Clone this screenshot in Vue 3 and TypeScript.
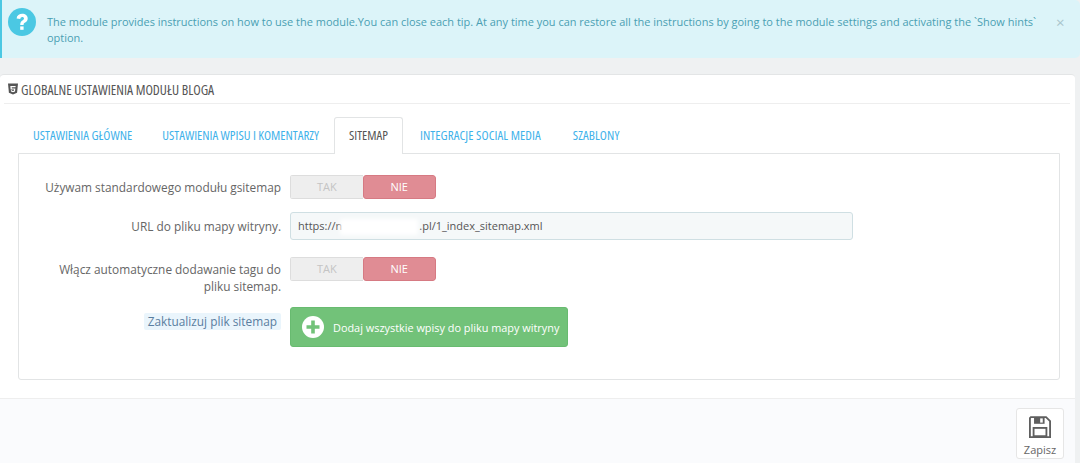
<script setup lang="ts">
const tabs = [
  { name: 'USTAWIENIA GŁÓWNE', active: false },
  { name: 'USTAWIENIA WPISU I KOMENTARZY', active: false },
  { name: 'SITEMAP', active: true },
  { name: 'INTEGRACJE SOCIAL MEDIA', active: false },
  { name: 'SZABLONY', active: false }
]
</script>

<template>
  <div class="page">
    <div class="alert">
      <svg class="alert-icon" viewBox="0 0 28 28">
        <circle cx="14" cy="14" r="14" fill="#4bc8e3" />
        <path d="M8.6 10.4c.4-3 2.6-4.6 5.6-4.6 3.2 0 5.5 1.8 5.5 4.6 0 2.2-1.2 3.2-2.6 4.1-1.2.8-1.5 1.3-1.5 2.5h-3.4c0-2.3.7-3.4 2.2-4.4 1-.7 1.6-1.2 1.6-2 0-1-.7-1.6-1.7-1.6-1.1 0-1.8.7-2 1.9z" fill="#fff" />
        <rect x="12.2" y="18.4" width="3.4" height="3.4" fill="#fff" />
      </svg>
      <p class="alert-text">The module provides instructions on how to use the module.You can close each tip. At any time you can restore all the instructions by going to the module settings and activating the `Show hints` option.</p>
      <span class="alert-close">×</span>
    </div>

    <div class="panel">
      <div class="panel-heading">
        <svg class="html-icon" viewBox="0 0 12 13">
          <path d="M0 0h12l-1.1 11L6 13l-4.9-2z" fill="#555" />
          <path d="M2.8 2.8h6.4l-.2 1.6H4.5l.1 1.4h4.2l-.4 3.8L6 10.4l-2.4-.8-.2-1.7h1.4l.1.7 1.1.3 1.1-.3.1-1.4H3.1z" fill="#fff" />
        </svg>
        <span class="narrow">GLOBALNE USTAWIENIA MODUŁU BLOGA</span>
      </div>

      <div class="panel-body">
        <ul class="tabs">
          <li v-for="tab in tabs" :key="tab.name" class="tab narrow" :class="{ active: tab.active }">{{ tab.name }}</li>
        </ul>

        <div class="tab-content">
          <div class="form-row row-switch">
            <label class="form-label">Używam standardowego modułu gsitemap</label>
            <div class="switch">
              <span class="switch-off">TAK</span>
              <span class="switch-on">NIE</span>
            </div>
          </div>

          <div class="form-row row-url">
            <label class="form-label">URL do pliku mapy witryny.</label>
            <div class="url-input">
              <span>https://n<span class="url-hidden"></span>.pl/1_index_sitemap.xml</span>
              <i class="url-smear"></i>
            </div>
          </div>

          <div class="form-row row-switch-two">
            <label class="form-label">Włącz automatyczne dodawanie tagu do pliku sitemap.</label>
            <div class="switch">
              <span class="switch-off">TAK</span>
              <span class="switch-on">NIE</span>
            </div>
          </div>

          <div class="form-row row-action">
            <label class="form-label"><span class="hint-label">Zaktualizuj plik sitemap</span></label>
            <button class="add-btn">
              <svg class="add-icon" viewBox="0 0 22 22">
                <circle cx="11" cy="11" r="11" fill="#fff" />
                <path d="M9.2 4.5h3.6v4.7h4.7v3.6h-4.7v4.7H9.2v-4.7H4.5V9.2h4.7z" fill="#72c279" />
              </svg>
              <span>Dodaj wszystkie wpisy do pliku mapy witryny</span>
            </button>
          </div>
        </div>
      </div>

      <div class="panel-footer">
        <button class="save-btn">
          <svg class="save-icon" viewBox="0 0 24 24">
            <path d="M2 1.2h16.6L23 5.6V23H1V2.2z" fill="none" stroke="#5f5f5f" stroke-width="2" />
            <rect x="5.5" y="1.5" width="11.5" height="7" fill="#5f5f5f" />
            <rect x="12.2" y="2.6" width="2.8" height="4.6" fill="#fff" />
            <rect x="5" y="13" width="14" height="9" fill="none" stroke="#5f5f5f" stroke-width="2" />
          </svg>
          <span>Zapisz</span>
        </button>
      </div>
    </div>
  </div>
</template>

<style>
html,
body {
  margin: 0;
  background: #eff1f2;
}
</style>

<style scoped>
.page {
  width: 1080px;
  height: 463px;
  overflow: hidden;
  font-family: "Open Sans", "Liberation Sans", sans-serif;
  font-size: 11.85px;
  color: #666;
  background: #eff1f2;
}

.narrow {
  font-family: "Open Sans", "Liberation Sans", sans-serif;
  font-stretch: 75%;
}

.alert {
  box-sizing: border-box;
  height: 58px;
  display: flex;
  background: #dcf4f9;
  border-left: 2px solid #4bc8e3;
  border-radius: 0 5px 5px 0;
  padding-left: 6px;
  color: #4a9fb3;
}

.alert-icon {
  width: 28px;
  height: 28px;
  margin-top: 8px;
  flex: none;
}

.alert-text {
  width: 995px;
  margin: 14px 0 0 11px;
  line-height: 15.5px;
  font-size: 10.97px;
}

.alert-close {
  margin: 13px 0 0 14px;
  font-size: 15px;
  line-height: 18px;
  color: #a9c4cc;
}

.panel {
  box-sizing: border-box;
  height: 389px;
  margin: 16px 5px 0 0;
  background: #fff;
  border-top: 1px solid #e3e5e6;
  border-radius: 4px 4px 0 0;
  display: flex;
  flex-direction: column;
}

.panel-heading {
  height: 28px;
  margin: 0 5px 0 4px;
  display: flex;
  align-items: center;
  gap: 3px;
  padding-left: 4px;
  border-bottom: 1px solid #eeeeee;
  font-size: 13.7px;
  color: #555;
}

.html-icon {
  width: 10px;
  height: 12px;
}

.panel-body {
  flex: 1;
  padding: 13px 15px 0 18px;
}

.tabs {
  display: flex;
  height: 37px;
  margin: 0;
  padding: 0;
  list-style: none;
}

.tab {
  box-sizing: border-box;
  height: 37px;
  padding: 0 15px;
  line-height: 37px;
  font-size: 13px;
  color: #3fb2ea;
}

.tab:nth-child(n + 4) {
  margin-left: 2px;
  letter-spacing: 0.08px;
}

.tab.active {
  position: relative;
  z-index: 1;
  color: #555;
  background: #fff;
  border: 1px solid #e2e4e5;
  border-bottom: none;
  border-radius: 3px 3px 0 0;
  padding: 0 14px;
  line-height: 35px;
}

.tab-content {
  box-sizing: border-box;
  height: 227px;
  margin-top: -1px;
  border: 1px solid #e2e4e5;
  border-radius: 0 0 3px 3px;
  padding-top: 21px;
}

.form-row {
  display: grid;
  grid-template-columns: 262px 1fr;
  column-gap: 9px;
}

.row-url {
  margin-top: 13px;
}

.row-switch-two {
  margin-top: 17px;
}

.row-action {
  margin-top: 12px;
}

.form-label {
  text-align: right;
  line-height: 17px;
  padding: 4px 0 0 20px;
  color: #666;
}

.row-url .form-label {
  padding-top: 6px;
}

.row-action .form-label {
  padding-top: 6px;
}

.hint-label {
  display: inline-block;
  padding: 0 4px;
  background: #eaf5fc;
  color: #5a7ea0;
  border-radius: 2px;
}

.switch {
  display: flex;
  width: 146px;
  height: 24px;
  box-sizing: border-box;
  border-radius: 3px;
  overflow: hidden;
  text-align: center;
  line-height: 22px;
  font-size: 11px;
}

.switch-off {
  flex: 1;
  background: #eeeeee;
  border: 1px solid #dddddd;
  border-right: none;
  color: #c4c4c4;
}

.switch-on {
  flex: 1;
  background: #e08c94;
  border: 1px solid #d67a83;
  border-radius: 3px;
  color: #fff;
}

.url-input {
  position: relative;
  box-sizing: border-box;
  width: 563px;
  height: 28px;
  padding-left: 7px;
  line-height: 26px;
  font-size: 11px;
  background: #f5f8f9;
  border: 1px solid #cfdfe3;
  border-radius: 3px;
  color: #555;
}

.url-hidden {
  display: inline-block;
  width: 77px;
}

.url-smear {
  position: absolute;
  left: 49px;
  top: 6px;
  width: 78px;
  height: 16px;
  background: #fff;
  filter: blur(2px);
}

.add-btn {
  display: flex;
  align-items: center;
  gap: 9px;
  box-sizing: border-box;
  width: 278px;
  height: 40px;
  padding: 0 0 0 11px;
  background: #72c279;
  border: 1px solid #68bb70;
  border-radius: 3px;
  font-family: inherit;
  font-size: 10.9px;
  color: #fff;
  white-space: nowrap;
}

.add-icon {
  width: 22px;
  height: 22px;
  flex: none;
}

.panel-footer {
  box-sizing: border-box;
  height: 65px;
  display: flex;
  justify-content: flex-end;
  padding: 9px 11px 0 0;
  background: #fafbfd;
  border-top: 1px solid #eeeeee;
}

.save-btn {
  box-sizing: border-box;
  width: 48px;
  height: 51px;
  padding: 7px 0 0;
  display: flex;
  flex-direction: column;
  align-items: center;
  gap: 4px;
  background: #fff;
  border: 1px solid #e6e6e6;
  border-radius: 3px;
  font-family: inherit;
  font-size: 11px;
  color: #666;
}

.save-icon {
  width: 22px;
  height: 22px;
}
</style>
